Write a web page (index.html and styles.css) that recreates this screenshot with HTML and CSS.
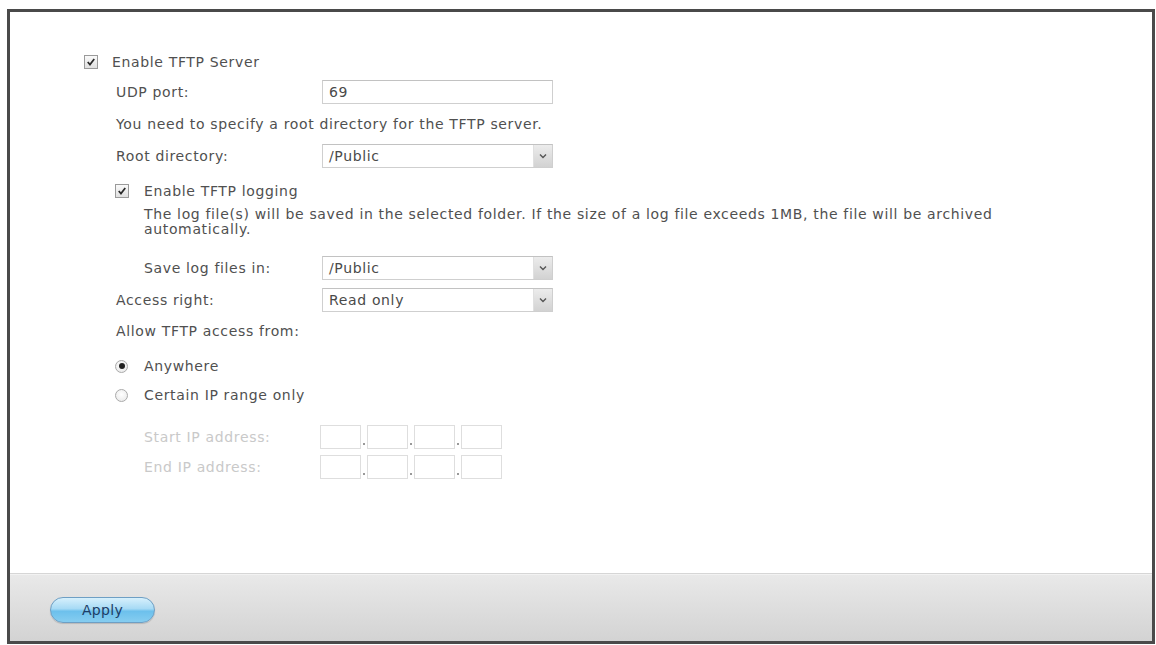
FILE: index.html
```html
<!DOCTYPE html>
<html>
<head>
<meta charset="utf-8">
<link rel="stylesheet" href="styles.css">
</head>
<body>
<div class="frame">
  <div class="content">
    <div class="row r1">
      <span class="check"><svg viewBox="0 0 14 14" width="14" height="14"><path d="M3.2 7 L5.8 10 L10.8 3.5" fill="none" stroke="#2a2a2a" stroke-width="2"/></svg></span>
      <span class="check-label">Enable TFTP Server</span>
    </div>
    <div class="row field i1 r2">
      <span class="label">UDP port:</span>
      <span class="input">69</span>
    </div>
    <div class="row i1 r3"><span class="text">You need to specify a root directory for the TFTP server.</span></div>
    <div class="row field i1 r4">
      <span class="label">Root directory:</span>
      <span class="input select">/Public<span class="arrow"><svg viewBox="0 0 8 6" width="8" height="6"><path d="M1 1.5 L4 4.5 L7 1.5" fill="none" stroke="#555" stroke-width="1.4"/></svg></span></span>
    </div>
    <div class="row i1b r5">
      <span class="check"><svg viewBox="0 0 14 14" width="14" height="14"><path d="M3.2 7 L5.8 10 L10.8 3.5" fill="none" stroke="#2a2a2a" stroke-width="2"/></svg></span>
      <span class="check-label">Enable TFTP logging</span>
    </div>
    <p class="desc i2">The log file(s) will be saved in the selected folder. If the size of a log file exceeds 1MB, the file will be archived automatically.</p>
    <div class="row field i2 r7">
      <span class="label">Save log files in:</span>
      <span class="input select">/Public<span class="arrow"><svg viewBox="0 0 8 6" width="8" height="6"><path d="M1 1.5 L4 4.5 L7 1.5" fill="none" stroke="#555" stroke-width="1.4"/></svg></span></span>
    </div>
    <div class="row field i1 r8">
      <span class="label">Access right:</span>
      <span class="input select">Read only<span class="arrow"><svg viewBox="0 0 8 6" width="8" height="6"><path d="M1 1.5 L4 4.5 L7 1.5" fill="none" stroke="#555" stroke-width="1.4"/></svg></span></span>
    </div>
    <div class="row i1 r9"><span class="text">Allow TFTP access from:</span></div>
    <div class="row i1b r10">
      <span class="radio on"></span>
      <span class="radio-label">Anywhere</span>
    </div>
    <div class="row i1b r11">
      <span class="radio"></span>
      <span class="radio-label">Certain IP range only</span>
    </div>
    <div class="row field i2 r12 disabled">
      <span class="label">Start IP address:</span>
      <span class="ip"><span class="oct"></span><span class="dot"></span><span class="oct"></span><span class="dot"></span><span class="oct"></span><span class="dot"></span><span class="oct"></span></span>
    </div>
    <div class="row field i2 r13 disabled">
      <span class="label">End IP address:</span>
      <span class="ip"><span class="oct"></span><span class="dot"></span><span class="oct"></span><span class="dot"></span><span class="oct"></span><span class="dot"></span><span class="oct"></span></span>
    </div>
  </div>
  <div class="footer">
    <button class="apply">Apply</button>
  </div>
</div>
</body>
</html>
```
FILE: styles.css
```css
html, body {
  margin: 0;
  padding: 0;
  background: #fff;
}
body {
  padding: 9px 1px 0 7px;
  font-family: "DejaVu Sans", Verdana, sans-serif;
  font-size: 14px;
  letter-spacing: 0.65px;
  color: #505050;
}
.frame {
  box-sizing: border-box;
  height: 635px;
  border: 3px solid #4a4a4a;
  display: flex;
  flex-direction: column;
  background: #fff;
}
.content {
  flex: 1;
  padding: 38px 0 0 74px;
  display: flex;
  flex-direction: column;
}
.row {
  display: flex;
  align-items: center;
  height: 24px;
}
.i1 { padding-left: 32px; }
.i1b { padding-left: 31px; }
.i2 { padding-left: 60px; }
.i1 .label { width: 206px; }
.i2 .label { width: 178px; }
.label { flex: none; }

.r2 { margin-top: 6px; }
.r3 { margin-top: 8px; }
.r4 { margin-top: 8px; }
.r5 { margin-top: 11px; }
.r7 { margin-top: 19px; }
.r8 { margin-top: 8px; }
.r9 { margin-top: 9px; height: 20px; }
.r10 { margin-top: 13px; }
.r11 { margin-top: 5px; }
.r12 { margin-top: 18px; }
.r13 { margin-top: 6px; }

.check {
  width: 14px;
  height: 14px;
  box-sizing: border-box;
  border: 1px solid #9a9a9a;
  background: linear-gradient(#fafafa, #e0e0e0);
  display: flex;
  align-items: center;
  justify-content: center;
  flex: none;
}
.check svg { display: block; }
.check-label { margin-left: 14px; }
.i1b .check-label { margin-left: 15px; }

.input {
  box-sizing: border-box;
  width: 231px;
  height: 24px;
  border: 1px solid #cfcfcf;
  border-top-color: #c2c2c2;
  padding-left: 6px;
  display: flex;
  align-items: center;
  color: #4a4a4a;
  background: #fff;
  position: relative;
}
.select { padding-right: 18px; }
.arrow {
  position: absolute;
  right: 0;
  top: 0;
  bottom: 0;
  width: 18px;
  background: linear-gradient(#ececec, #d2d2d2);
  border-left: 1px solid #e0e0e0;
  display: flex;
  align-items: center;
  justify-content: center;
}
.arrow svg { display: block; }

.desc {
  margin: 4px 0 0 0;
  width: 860px;
  line-height: 15px;
}

.radio {
  width: 13px;
  height: 13px;
  box-sizing: border-box;
  border: 1px solid #aaa;
  border-radius: 50%;
  background: radial-gradient(circle at 50% 40%, #fff, #e6e6e6);
  display: flex;
  align-items: center;
  justify-content: center;
  flex: none;
}
.radio.on::after {
  content: "";
  width: 6px;
  height: 6px;
  border-radius: 50%;
  background: #222;
}
.radio-label { margin-left: 16px; }

.disabled { color: #c9c9c9; }
.ip {
  display: flex;
  align-items: stretch;
  height: 24px;
  margin-left: -2px;
}
.oct {
  box-sizing: border-box;
  width: 41px;
  border: 1px solid #dedede;
  background: #fff;
}
.dot {
  width: 6px;
  position: relative;
}
.dot::after {
  content: "";
  position: absolute;
  left: 2px;
  bottom: 4px;
  width: 2px;
  height: 2px;
  background: #999;
}

.footer {
  flex: none;
  height: 68px;
  box-sizing: border-box;
  border-top: 1px solid #d6d6d6;
  box-shadow: inset 0 1px 0 #f2f2f2;
  background: linear-gradient(#e9e9e9, #d3d3d3);
  display: flex;
  align-items: center;
  padding-left: 40px;
  padding-top: 4px;
}
.apply {
  width: 105px;
  height: 26px;
  border-radius: 13px;
  border: 1px solid #6e9fc4;
  background: linear-gradient(#d7f0fc 0%, #a6daf5 45%, #6cc0ec 55%, #86cdf0 100%);
  box-shadow: 0 1px 1px rgba(0,0,0,0.15);
  font-family: "DejaVu Sans", Verdana, sans-serif;
  font-size: 14px;
  letter-spacing: 0.3px;
  color: #1c3d66;
  padding: 0;
}
```
